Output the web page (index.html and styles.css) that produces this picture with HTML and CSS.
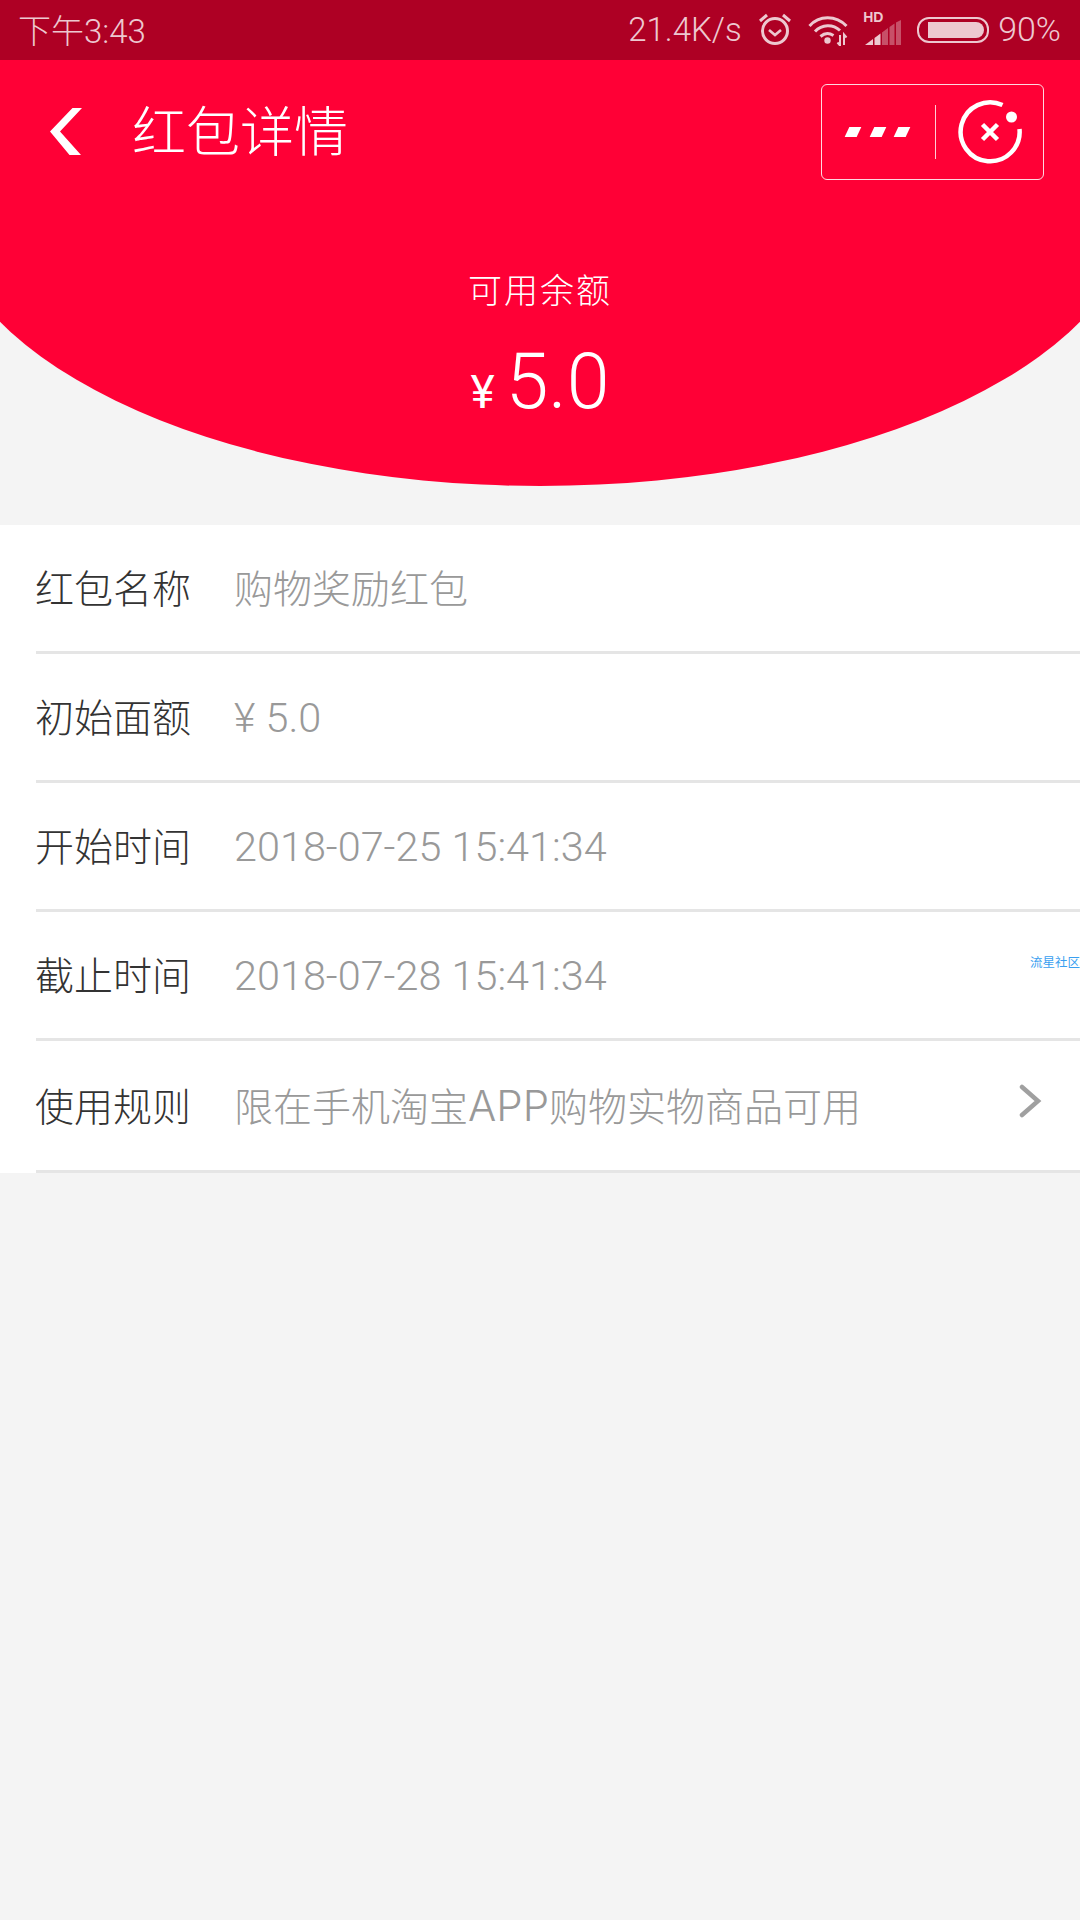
FILE: index.html
```html
<!DOCTYPE html>
<html lang="zh-CN">
<head>
<meta charset="utf-8">
<title>红包详情</title>
<link rel="stylesheet" href="styles.css">
</head>
<body>
<div class="page">
  <header class="hero">
    <div class="status">
      <span class="status-time">下午3:43</span>
      <div class="status-right">
        <span class="status-speed">21.4K/s</span>
        <svg class="ic-alarm" width="34" height="34" viewBox="0 0 34 34" fill="none" stroke="#edc8d0">
          <circle cx="17" cy="19" r="12.5" stroke-width="3"/>
          <path d="M11 18l6 5 6-5" stroke-width="2.6"/>
          <path d="M2 9l7-6M32 9l-7-6" stroke-width="3"/>
        </svg>
        <svg class="ic-wifi" width="40" height="32" viewBox="0 0 40 32" fill="none" stroke="#edc8d0" stroke-width="3">
          <path d="M1.500 12C11 1 28 1 38.500 12"/>
          <path d="M7 17.500C14 10 25 10 32 16.500"/>
          <path d="M12.500 22.500c4-3.500 9-3.500 13-1"/>
          <circle cx="19.500" cy="26.500" r="3.200" fill="#edc8d0" stroke="none"/>
          <path d="M32 21v10.500l-2.500-3M36 31V20.500l2.500 3" stroke-width="2"/>
        </svg>
        <div class="signal">
          <span class="signal-hd">HD</span>
          <svg width="38" height="26" viewBox="0 0 38 26" fill="#edc8d0">
            <path d="M1 25l8-6v6z"/>
            <path d="M10.500 18l6-4.500V25h-6z"/>
            <path d="M18 12.500l6-4.500v17h-6z" fill-opacity=".4"/>
            <path d="M25.500 7l5-3.500V25h-5z" fill-opacity=".4"/>
            <path d="M32 2.500L37 0v25h-5z" fill-opacity=".4"/>
          </svg>
        </div>
        <div class="battery"><span class="battery-fill"></span></div>
        <span class="status-pct">90%</span>
      </div>
    </div>
    <nav class="nav">
      <svg class="back" width="32" height="47" viewBox="0 0 32 47" fill="#fff">
        <path d="M22.500 0H32L10 23.500 31 47H19.500L0 23.500z"/>
      </svg>
      <h1 class="title">红包详情</h1>
      <div class="capsule">
        <div class="capsule-more">
          <span class="dash"></span><span class="dash"></span><span class="dash"></span>
        </div>
        <div class="capsule-sep"></div>
        <svg class="capsule-close" width="66" height="66" viewBox="0 0 66 66" fill="none" stroke="#fff">
          <path d="M45.500 6A29.500 29.500 0 1 0 62.500 30" stroke-width="4.500"/>
          <circle cx="54.500" cy="18" r="5.500" fill="#fff" stroke="none"/>
          <path d="M25.500 25.500l15 15M40.500 25.500l-15 15" stroke-width="4.500"/>
        </svg>
      </div>
    </nav>
    <div class="balance">
      <div class="balance-label">可用余额</div>
      <div class="balance-amount"><span class="balance-yen">¥</span><span class="balance-num">5.0</span></div>
    </div>
  </header>

  <section class="list">
    <div class="row"><div class="row-body">
      <span class="row-label">红包名称</span><span class="row-value">购物奖励红包</span>
    </div></div>
    <div class="row"><div class="row-body">
      <span class="row-label">初始面额</span><span class="row-value row-num">¥ 5.0</span>
    </div></div>
    <div class="row"><div class="row-body">
      <span class="row-label">开始时间</span><span class="row-value row-num">2018-07-25 15:41:34</span>
    </div></div>
    <div class="row"><div class="row-body">
      <span class="row-label">截止时间</span><span class="row-value row-num">2018-07-28 15:41:34</span>
      <span class="watermark">流星社区</span>
    </div></div>
    <div class="row row-last"><div class="row-body">
      <span class="row-label">使用规则</span><span class="row-value">限在手机淘宝<span class="latin">APP</span>购物实物商品可用</span>
      <svg class="row-arrow" width="24" height="34" viewBox="0 0 24 34" fill="none" stroke="#a0a0a0" stroke-width="4.500" stroke-linecap="round">
        <path d="M3 3l16 14L3 31"/>
      </svg>
    </div></div>
  </section>
</div>
</body>
</html>
```

FILE: styles.css
```css
* { box-sizing: border-box; }
html, body { margin: 0; padding: 0; }
body {
  width: 1080px;
  height: 1920px;
  overflow: hidden;
  background: #f4f4f4;
  font-family: Roboto, "Noto Sans CJK SC", sans-serif;
  font-weight: 300;
}
.page { width: 1080px; }

/* hero with curved red backdrop */
.hero {
  position: relative;
  z-index: 0;
  height: 525px;
  overflow: hidden;
  color: #fff;
  background: linear-gradient(#ff0036, #ff0036) top / 100% 200px no-repeat;
}
.hero::before {
  content: "";
  position: absolute;
  z-index: -1;
  left: -60px;
  top: -96px;
  width: 1200px;
  height: 582px;
  border-radius: 50%;
  background: #ff0036;
}

/* status bar */
.status {
  display: flex;
  align-items: center;
  justify-content: space-between;
  height: 60px;
  padding: 0 19px 0 18px;
  background: #ae0024;
  color: #edc8d0;
  font-size: 33px;
  font-weight: 300;
}
.status-time { margin-top: -2px; }
.status-right { display: flex; align-items: center; }
.status-speed { width: 130px; margin-top: -2px; }
.ic-alarm { margin-right: 16px; margin-top: -2px; }
.ic-wifi { margin-right: 16px; }
.signal {
  position: relative;
  width: 38px;
  height: 30px;
  margin-top: 2px;
  margin-right: 15px;
  display: flex;
  align-items: flex-end;
}
.signal-hd {
  position: absolute;
  left: -1px;
  top: -7px;
  font: 700 14px "Liberation Sans", sans-serif;
}
.battery {
  width: 72px;
  height: 26px;
  border: 2px solid #edc8d0;
  border-radius: 12px;
  padding: 3px 3px 3px 9px;
  margin-right: 9px;
}
.battery-fill {
  display: block;
  height: 100%;
  background: #edc8d0;
  border-radius: 0 8px 8px 0;
}
.status-pct { margin-top: -2px; font-size: 34px; }

/* navigation */
.nav {
  display: flex;
  align-items: center;
  height: 96px;
  margin-top: 24px;
  padding: 0 36px 0 50px;
}
.back { margin-top: -2px; }
.title {
  margin: -6px 0 0 50px;
  font-family: "Noto Sans CJK SC", sans-serif;
  font-size: 54px;
  font-weight: 300;
  line-height: 1;
}
.capsule {
  display: flex;
  align-items: center;
  width: 223px;
  height: 96px;
  margin-left: auto;
  border: 1px solid rgba(255,255,255,.85);
  border-radius: 6px;
}
.capsule-more {
  display: flex;
  gap: 13px;
  width: 113px;
  padding-left: 25px;
}
.dash {
  width: 11.500px;
  height: 10px;
  background: #fff;
  transform: skewX(-25deg);
}
.capsule-sep { width: 1px; height: 54px; background: rgba(255,255,255,.8); }
.capsule-close { margin-left: 21px; }

/* balance */
.balance { text-align: center; padding-top: 84px; }
.balance-label {
  font-family: "Noto Sans CJK SC", sans-serif;
  font-size: 34px;
  letter-spacing: 2px;
  line-height: 50px;
}
.balance-amount {
  display: flex;
  justify-content: center;
  align-items: baseline;
  gap: 11px;
  margin-top: 26px;
  line-height: 84px;
}
.balance-yen { font-size: 46px; font-weight: 400; }
.balance-num { font-size: 77px; }

/* list */
.list { background: #fff; color: #333; }
.row { padding-left: 36px; }
.row-body {
  position: relative;
  display: flex;
  align-items: center;
  height: 129px;
  padding-bottom: 4px;
  border-bottom: 3px solid #e5e5e5;
  font-size: 39px;
}
.row-last .row-body { height: 132px; }
.row-label {
  width: 198px;
  margin-left: -1px;
  margin-right: 1px;
  font-family: "Noto Sans CJK SC", sans-serif;
}
.row-value { color: #999; }
.row-num { font-size: 41.400px; margin-top: 5px; }
.latin { font-family: Inter, sans-serif; font-size: 42px; font-weight: 300; }
.row-arrow { margin-left: auto; margin-right: 37px; margin-top: -5px; }
.watermark {
  position: absolute;
  right: 0;
  top: 40px;
  color: #3a9ff0;
  font-family: "Noto Sans CJK SC", sans-serif;
  font-size: 12.500px;
  font-weight: 400;
  white-space: nowrap;
}
```
